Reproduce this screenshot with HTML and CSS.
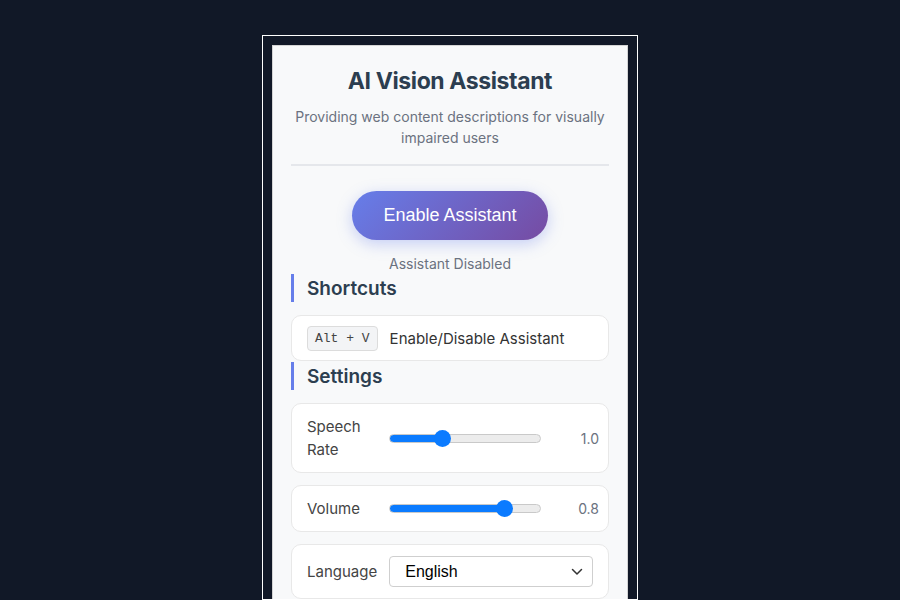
FILE: index.html
```html
<!DOCTYPE html>
<html lang="en">
<head>
<meta charset="utf-8">
<title>AI Vision Assistant</title>
<link rel="stylesheet" href="styles.css">
</head>
<body>
<div class="frame">
  <div class="panel">
    <header class="header">
      <h1 class="title">AI Vision Assistant</h1>
      <p class="subtitle">Providing web content descriptions for visually impaired users</p>
    </header>
    <div class="toggle-area">
      <button class="toggle-btn">Enable Assistant</button>
      <div class="status">Assistant Disabled</div>
    </div>
    <h2 class="section-title">Shortcuts</h2>
    <div class="card shortcut">
      <kbd class="kbd">Alt + V</kbd>
      <span class="shortcut-text">Enable/Disable Assistant</span>
    </div>
    <h2 class="section-title">Settings</h2>
    <div class="settings">
      <div class="card setting">
        <label class="setting-label">Speech Rate</label>
        <input class="range" type="range" min="0.5" max="2" step="0.1" value="1" style="--p:33.3%">
        <span class="setting-value">1.0</span>
      </div>
      <div class="card setting">
        <label class="setting-label">Volume</label>
        <input class="range" type="range" min="0" max="1" step="0.1" value="0.8" style="--p:80%">
        <span class="setting-value">0.8</span>
      </div>
      <div class="card setting setting-lang">
        <label class="setting-label lang-label">Language</label>
        <div class="select-wrap">
          <select class="select">
            <option>English</option>
          </select>
          <svg class="chev" width="12" height="8" viewBox="0 0 12 8"><path d="M1.5 1.5 L6 6 L10.5 1.5" fill="none" stroke="#333" stroke-width="1.5" stroke-linecap="round" stroke-linejoin="round"/></svg>
        </div>
      </div>
    </div>
  </div>
</div>
</body>
</html>
```
FILE: styles.css
```css
* { box-sizing: border-box; }
html, body { margin: 0; padding: 0; }
body {
  background: #111827;
  font-family: Inter, "Noto Sans", sans-serif;
  height: 600px;
  overflow: hidden;
}
.frame {
  width: 376px;
  margin: 35px auto 0;
  border: 1px solid #ffffff;
  padding: 9px 9px 0;
  height: 565px;
  overflow: hidden;
}
.panel {
  background: #f8f9fa;
  border: 1px solid #d4d4d4;
  padding: 18px 18px 20px;
  height: 700px;
}
.header {
  text-align: center;
  border-bottom: 2px solid #e5e7eb;
  padding-bottom: 16px;
}
.title {
  margin: 0;
  font-size: 23px;
  line-height: 34px;
  font-weight: 700;
  color: #2c3e50;
  letter-spacing: -0.4px;
}
.subtitle {
  margin: 8px 0 0;
  font-size: 14px;
  line-height: 21px;
  color: #6b7280;
}
.toggle-area {
  display: flex;
  flex-direction: column;
  align-items: center;
  padding-top: 25px;
}
.toggle-btn {
  width: 196px;
  height: 49px;
  border: none;
  border-radius: 25px;
  background: linear-gradient(135deg, #667eea 0%, #764ba2 100%);
  color: #fff;
  font-family: "Liberation Sans", Arial, sans-serif;
  font-size: 18px;
  box-shadow: 0 4px 15px rgba(102, 126, 234, 0.35);
  padding: 0;
}
.status {
  margin-top: 13px;
  font-size: 14px;
  line-height: 21px;
  color: #6b7280;
}
.section-title {
  margin: 0 0 13px;
  border-left: 3px solid #667eea;
  padding: 2px 0 0 13px;
  font-size: 19px;
  line-height: 26px;
  font-weight: 600;
  color: #2c3e50;
}
.card {
  background: #fff;
  border: 1px solid #e8e8e8;
  border-radius: 10px;
}
.shortcut {
  display: flex;
  align-items: center;
  gap: 12px;
  height: 46px;
  padding: 0 15px;
  margin-bottom: 1px;
}
.kbd {
  font-family: "Liberation Mono", "DejaVu Sans Mono", monospace;
  font-size: 13px;
  color: #444;
  background: #f3f4f6;
  border: 1px solid #dcdcdc;
  border-radius: 4px;
  padding: 0 7px;
  height: 25px;
  line-height: 23px;
}
.shortcut-text {
  font-size: 15px;
  color: #333;
}
.settings {
  display: flex;
  flex-direction: column;
  gap: 12px;
}
.setting {
  display: flex;
  align-items: center;
  padding: 11px 9px 11px 15px;
  line-height: 23px;
}
.setting-label {
  width: 70px;
  flex: none;
  font-size: 15px;
  line-height: 23px;
  color: #444;
}
.range {
  -webkit-appearance: none;
  appearance: none;
  display: block;
  width: 152px;
  margin: 0 0 0 12px;
  height: 17px;
  background: transparent;
  flex: none;
}
.range::-webkit-slider-runnable-track {
  height: 9px;
  border-radius: 5px;
  border: 1px solid #c9c9c9;
  background: linear-gradient(to right, #0b7bff 0, #0b7bff var(--p), #ececec var(--p), #ececec 100%);
}
.range::-webkit-slider-thumb {
  -webkit-appearance: none;
  width: 17px;
  height: 17px;
  border-radius: 50%;
  background: #0b7bff;
  border: none;
  margin-top: -5px;
}
.setting-value {
  flex: 1;
  text-align: right;
  font-size: 14px;
  line-height: 23px;
  color: #6b7280;
}
.setting-lang {
  padding-right: 15px;
}
.lang-label {
  width: auto;
  margin-right: 12px;
}
.select-wrap {
  position: relative;
  flex: 1;
  height: 31px;
}
.select {
  -webkit-appearance: none;
  appearance: none;
  display: block;
  width: 100%;
  height: 31px;
  border: 1px solid #cfcfcf;
  border-radius: 4px;
  background: #fff;
  padding: 0 15px;
  font-family: "Liberation Sans", Arial, sans-serif;
  font-size: 16px;
  color: #000;
}
.chev {
  position: absolute;
  right: 10px;
  top: 12px;
  pointer-events: none;
}
```
